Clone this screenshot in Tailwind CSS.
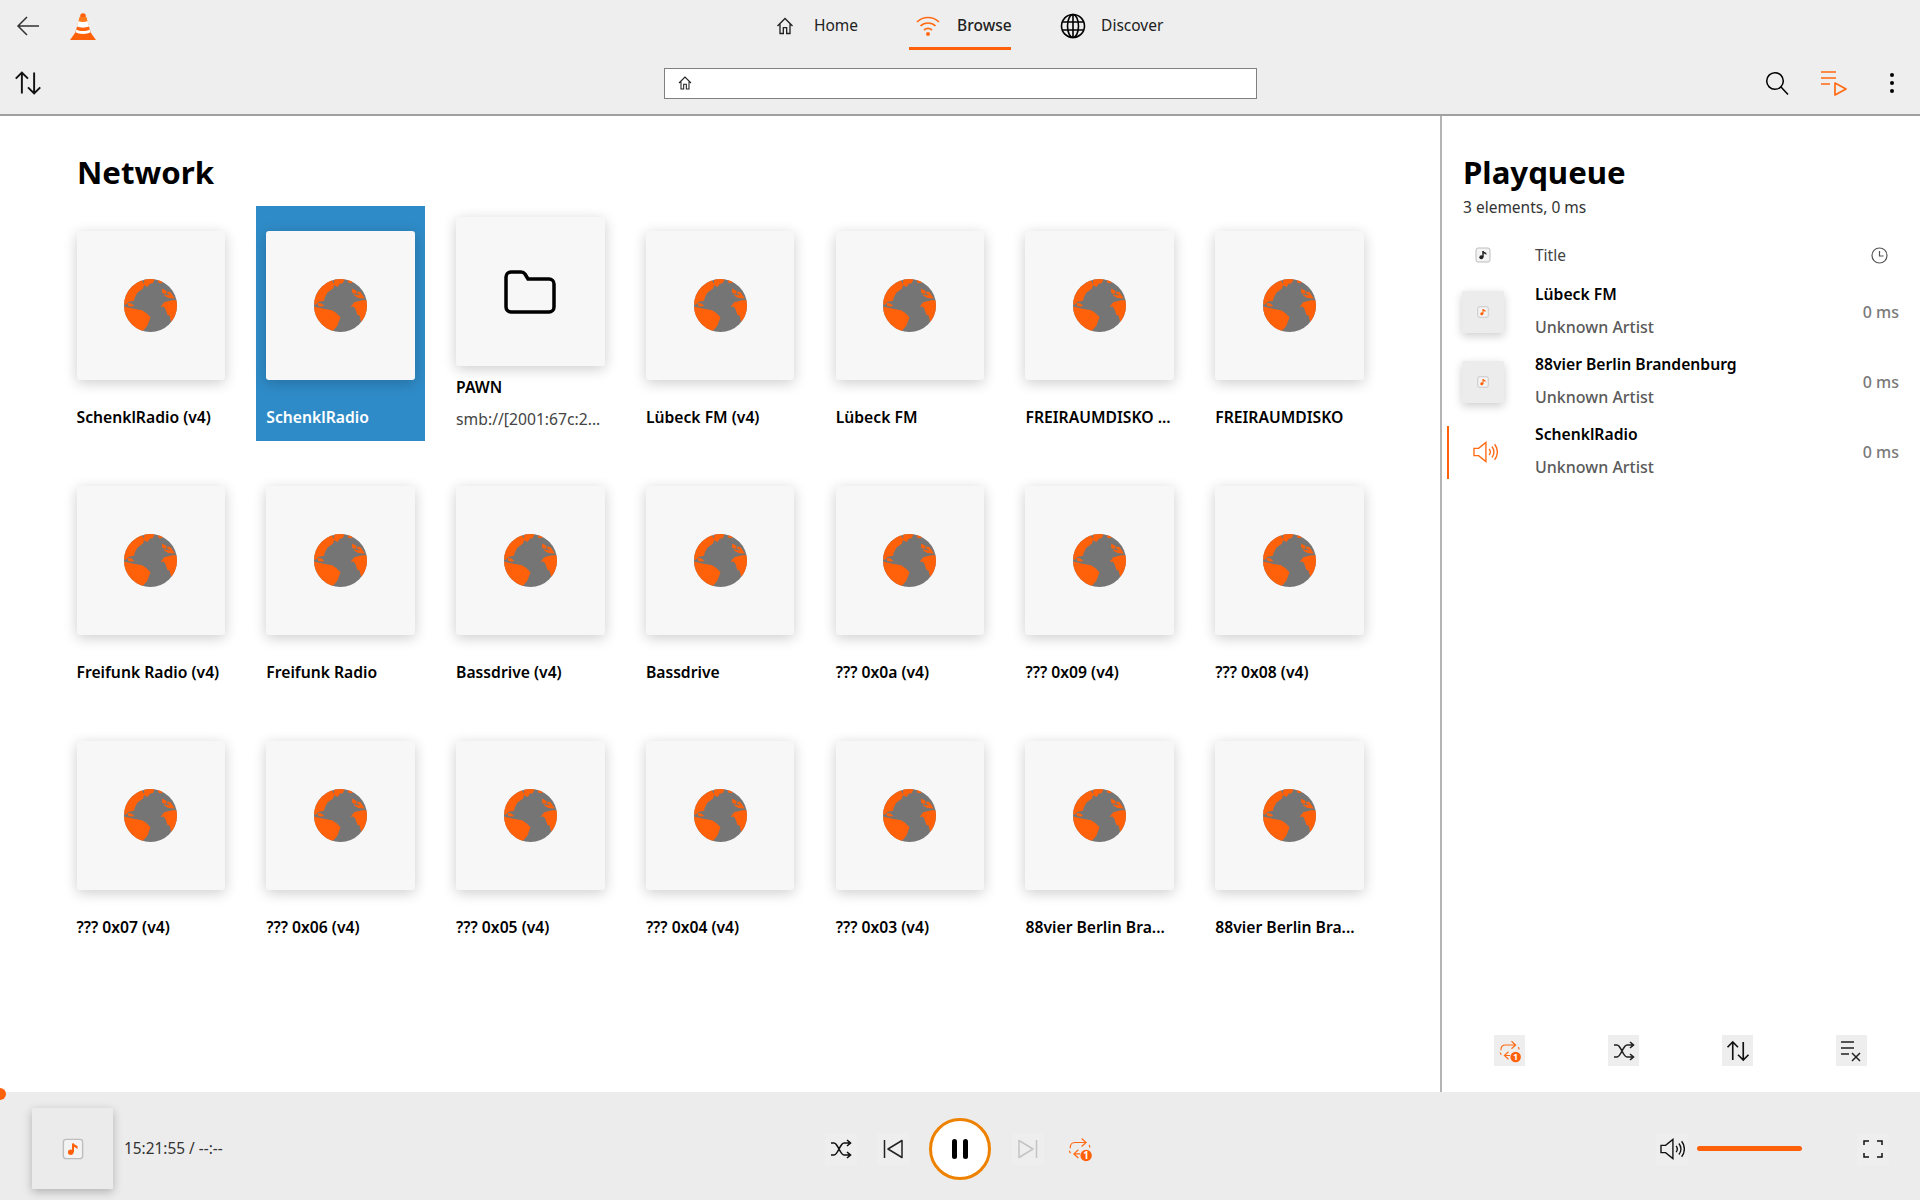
<!DOCTYPE html>
<html lang="en">

<head>
    <meta charset="UTF-8" />
    <title>VLC media player</title>
    <script src="https://cdn.jsdelivr.net/npm/@tailwindcss/browser@4"></script>
</head>

<body class="bg-white font-['Noto_Sans',sans-serif] text-black">
    <!-- shared icons -->
    <svg class="absolute w-0 h-0"><clipPath id="globe-clip"><circle cx="50" cy="50" r="50" /></clipPath></svg>
    <svg class="hidden">
        <symbol id="i-home" viewBox="0 0 24 24"><path d="M3 12 12 3l9 9M6 10v11h4v-7h4v7h4V10" fill="none" stroke="currentColor" stroke-width="1.6" /></symbol>
        <symbol id="i-sort" viewBox="0 0 32 32"><path d="M9 28V4M2 11l7-7 7 7M23 4v24M16 21l7 7 7-7" fill="none" stroke="currentColor" stroke-width="2.2" /></symbol>
        <symbol id="i-shuffle" viewBox="0 0 24 24"><path d="M2 6h3c4 0 6 12 10 12h6M2 18h3c4 0 6-12 10-12h6M18 3l3.500 3-3.500 3M18 15l3.500 3-3.500 3" fill="none" stroke="currentColor" stroke-width="1.600" /></symbol>
        <symbol id="i-repeat" viewBox="0 0 32 32">
            <path d="M4 15v-1c0-4 3-6 6-6h13M18 3l5.500 5-5.500 5M27 11c1 1 1 2 1 3M16 22H9M14 17l-5.500 5 5.500 5M3 18c0 1 .5 2 1.500 3" fill="none" stroke="#ff6a13" stroke-width="1.500" />
            <circle cx="23.500" cy="24" r="7" fill="#ff610a" />
            <text x="23.500" y="28.500" text-anchor="middle" font-size="12" font-weight="700" fill="#fff" font-family="Noto Sans">1</text>
        </symbol>
        <symbol id="i-speaker" viewBox="0 0 28 24"><path d="M2 8v8h5l8 6.500V1.500L7 8ZM18.500 8.500c1.500 2 1.500 5 0 7M21.500 6c3 3.500 3 8.500 0 12M24.500 3.500c4 5 4 12 0 17" fill="none" stroke="currentColor" stroke-width="1.500" /></symbol>
        <symbol id="i-note" viewBox="0 0 24 24">
            <rect x="1.500" y="1.500" width="21" height="21" rx="3" fill="#f3f3f3" stroke="#bdbdbd" stroke-width="1.500" />
            <path d="M12 6v9.500" stroke="currentColor" stroke-width="2.200" fill="none" />
            <path d="M12 5.500c1 2 3.500 2 5 3.500v3c-1.500-1.500-3.500-2-5-2.500Z" fill="currentColor" />
            <circle cx="9.500" cy="15.500" r="3" fill="currentColor" />
        </symbol>
        <symbol id="i-globe" viewBox="0 0 100 100">
            <circle cx="50" cy="50" r="50" fill="#757575" />
            <g clip-path="url(#globe-clip)">
                <path fill="#ff610a" d="M0 47V0h32l6 10-2 8-11 8-5 10-1 5-10 2-6 6ZM38 0h20l-4 8-6 1-3 6-7-3ZM63 0l12 5-5 3-5-1ZM0 52l18 4 16 3 8 5 8 8-6 16-10 12H0ZM7 45l7 1 6 5-6 1-6-1ZM69 53l7-9 15-4 9 0v36l-7 1-4 4-3-12-4-1-4-12-3-4ZM72 18l9 5 7 2 8 12-12-1-7-4-5-7Z" />
            </g>
            <path d="M74 28l12 2M82 20l-2 10" fill="none" stroke="#757575" stroke-width="2" />
        </symbol>
    </svg>

    <div class="w-[1920px] h-[1200px] overflow-hidden flex flex-col">
        <!-- HEADER -->
        <header class="h-[116px] bg-[#eeeeee] border-b-2 border-[#a0a0a0] flex flex-col shrink-0">
            <div class="h-[52px] flex items-center">
                <svg class="w-6 h-6 ml-4 text-[#333]" viewBox="0 0 24 24"><path d="M23 12H3M11 3l-9 9 9 9" fill="none" stroke="currentColor" stroke-width="1.500" /></svg>
                <!-- vlc cone -->
                <svg class="w-[26px] h-[27px] ml-[30px]" viewBox="0 0 26 27">
                    <circle cx="13" cy="3" r="2.800" fill="#ff610a" />
                    <path d="M9.500 4h7l2 8c-3 1.500-8 1.500-11 0Z" fill="#ff7a1a" />
                    <path d="M8.500 8c2.500 1.200 6.500 1.200 9 0l1.200 5c-3 1.500-8.400 1.500-11.400 0Z" fill="#fff" />
                    <path d="M7 13.500c3 1.500 9 1.500 12 0l1.200 4.500c-4 2-10.400 2-14.400 0Z" fill="#ff610a" />
                    <path d="M6 17c3.500 2 10.500 2 14 0l1 3 5 7H0l5-7Z" fill="#ff610a" />
                    <path d="M6.300 16.500c3.500 2 9.900 2 13.400 0l.8 2.700c-4 2.300-11 2.300-15 0Z" fill="#fff" />
                </svg>
                <!-- tabs -->
                <nav class="flex items-center h-[52px] ml-[675px] text-[15.500px] text-[#222]">
                    <div class="flex items-center h-full">
                        <svg class="w-5 h-5 mx-1 text-[#222]"><use href="#i-home" /></svg>
                        <span class="ml-[15px]">Home</span>
                    </div>
                    <div class="relative flex items-center h-[52px] w-[102px] ml-[51px]">
                        <svg class="w-[26px] h-[26px] mx-[6px] text-[#ff6a13] shrink-0" viewBox="0 0 26 26"><path d="M2 9c6-6 16-6 22 0M5.500 13c4-4 11-4 15 0M9 17c2.500-2 5.500-2 8 0" fill="none" stroke="currentColor" stroke-width="1.700" /><circle cx="13" cy="21" r="2" fill="currentColor" /></svg>
                        <span class="ml-[10px] font-medium">Browse</span>
                        <span class="absolute left-0 right-0 bottom-[2px] h-[3px] bg-[#ff610a]"></span>
                    </div>
                    <div class="flex items-center h-full ml-[43px]">
                        <svg class="w-[26px] h-[26px] mx-[6px]" viewBox="0 0 26 26"><g fill="none" stroke="#000" stroke-width="1.600"><circle cx="13" cy="13" r="11.500" /><ellipse cx="13" cy="13" rx="5.500" ry="11.500" /><path d="M13 1.500v23M2 9h22M2 17h22" /></g></svg>
                        <span class="ml-[9px]">Discover</span>
                    </div>
                </nav>
            </div>
            <div class="h-[62px] flex items-center">
                <svg class="w-7 h-7 ml-[14px] text-[#111]"><use href="#i-sort" /></svg>
                <div class="ml-[622px] w-[593px] h-[31px] bg-white border border-[#808080] flex items-center pl-[12px]">
                    <svg class="w-4 h-4 text-[#222]"><use href="#i-home" /></svg>
                </div>
                <svg class="w-6 h-6 ml-[508px]" viewBox="0 0 24 24"><circle cx="10" cy="10" r="8.300" fill="none" stroke="#000" stroke-width="1.500" /><path d="m16 16 7 7.500" stroke="#000" stroke-width="1.500" /></svg>
                <svg class="w-[28px] h-[26px] ml-[31px] text-[#ff6a13]" viewBox="0 0 28 26"><path d="M1 2h15M1 8h15M1 14h9" stroke="currentColor" stroke-width="1.700" fill="none" /><path d="M15 13l11 6-11 6Z" stroke="currentColor" stroke-width="1.700" stroke-linejoin="round" fill="none" /></svg>
                <div class="ml-[42px] flex flex-col gap-[4px]">
                    <span class="w-1 h-1 rounded-full bg-black"></span>
                    <span class="w-1 h-1 rounded-full bg-black"></span>
                    <span class="w-1 h-1 rounded-full bg-black"></span>
                </div>
            </div>
        </header>

        <!-- MAIN -->
        <main class="flex h-[976px] shrink-0">
            <section class="w-[1440px] pt-[34px] shrink-0">
                <h1 class="ml-[77px] text-[31.200px] leading-[44px] font-bold">Network</h1>
                <div id="grid" class="mt-[12px] ml-[66px] grid grid-cols-[repeat(7,169px)] auto-rows-[235px] gap-x-[20.800px] gap-y-[20px]"></div>
            </section>

            <aside class="flex-1 border-l-2 border-[#b4b4b4] flex flex-col pt-[34px]">
                <h2 class="ml-[21px] text-[31.200px] leading-[44px] font-bold">Playqueue</h2>
                <p class="ml-[21px] text-[15.500px] leading-[26px] text-[#333]">3 elements, 0 ms</p>
                <div class="mt-[13px] h-[44px] flex items-center text-[#444]">
                    <svg class="w-4 h-4 ml-[33px] text-[#222]"><use href="#i-note" /></svg>
                    <span class="ml-[44px] pt-[2px] text-[15.500px] flex-1">Title</span>
                    <svg class="w-[17px] h-[17px] mr-[32px]" viewBox="0 0 17 17"><circle cx="8.500" cy="8.500" r="7.500" fill="none" stroke="#555" stroke-width="1.200" /><path d="M8.500 4v5h4" fill="none" stroke="#555" stroke-width="1.200" /></svg>
                </div>
                <div id="queue"></div>
                <div class="mt-auto mb-[26px] ml-[52px] flex gap-[83px]">
                    <button class="w-[31px] h-[31px] bg-[#eeeeee] flex items-center justify-center"><svg class="w-6 h-6"><use href="#i-repeat" /></svg></button>
                    <button class="w-[31px] h-[31px] bg-[#eeeeee] flex items-center justify-center text-[#222]"><svg class="w-6 h-6"><use href="#i-shuffle" /></svg></button>
                    <button class="w-[31px] h-[31px] bg-[#eeeeee] flex items-center justify-center text-[#111]"><svg class="w-6 h-6"><use href="#i-sort" /></svg></button>
                    <button class="w-[31px] h-[31px] bg-[#eeeeee] flex items-center justify-center"><svg class="w-6 h-6" viewBox="0 0 24 24"><path d="M1 3h13M1 9h13M1 15h8M12 14l8 8M20 14l-8 8" fill="none" stroke="#222" stroke-width="1.500" /></svg></button>
                </div>
            </aside>
        </main>

        <!-- PLAYER -->
        <footer class="relative h-[108px] shrink-0 bg-[#ececec] flex items-center pt-[5px]">
            <span class="absolute -left-[6px] -top-[4px] w-3 h-3 rounded-full bg-[#ff610a]"></span>
            <div class="w-[825px] shrink-0 flex items-center">
                <div class="ml-[32px] w-[81px] h-[81px] bg-[#ebebeb] rounded-[1px] shadow-[0_3px_10px_rgba(0,0,0,0.25)] flex items-center justify-center">
                    <svg class="w-[22px] h-[22px] text-[#ff610a]"><use href="#i-note" /></svg>
                </div>
                <span class="ml-[11px] text-[15.400px] text-[#333]">15:21:55 / --:--</span>
            </div>
            <div class="flex items-center">
                <button class="w-8 h-8 bg-[#eeeeee] flex items-center justify-center text-[#111]"><svg class="w-[24px] h-[24px]"><use href="#i-shuffle" /></svg></button>
                <button class="w-8 h-8 ml-5 bg-[#eeeeee] flex items-center justify-center"><svg class="w-6 h-6" viewBox="0 0 24 24"><path d="M3.500 3v18M21 3.500 7 12l14 8.500Z" fill="none" stroke="#222" stroke-width="1.500" stroke-linejoin="round" /></svg></button>
                <button class="w-[62px] h-[62px] ml-5 rounded-full bg-white border-[3px] border-[#ee8200] flex items-center justify-center gap-[6px]">
                    <span class="w-[5px] h-5 rounded-full bg-black"></span>
                    <span class="w-[5px] h-5 rounded-full bg-black"></span>
                </button>
                <button class="w-8 h-8 ml-[21px] bg-[#eeeeee] flex items-center justify-center"><svg class="w-6 h-6" viewBox="0 0 24 24"><path d="M20.500 3v18M3 3.500 17 12 3 20.500Z" fill="none" stroke="#c4c4c4" stroke-width="1.500" stroke-linejoin="round" /></svg></button>
                <button class="w-8 h-8 ml-5 flex items-center justify-center"><svg class="w-[26px] h-[26px]"><use href="#i-repeat" /></svg></button>
            </div>
            <button class="ml-[560px] w-8 h-8 bg-[#eeeeee] flex items-center justify-center text-[#111]"><svg class="w-[26px] h-[22px]"><use href="#i-speaker" /></svg></button>
            <div class="ml-[9px] w-[105px] h-[5px] rounded-full bg-[#ff610a]"></div>
            <button class="ml-[55px] w-8 h-8 bg-[#eeeeee] flex items-center justify-center"><svg class="w-5 h-[18px]" viewBox="0 0 20 18"><path d="M1 5V1h5M14 1h5v4M19 13v4h-5M6 17H1v-4" fill="none" stroke="#111" stroke-width="1.500" /></svg></button>
        </footer>
    </div>

    <script>
        const items = [
            'SchenklRadio (v4)', 'SchenklRadio', 'PAWN', 'Lübeck FM (v4)', 'Lübeck FM', 'FREIRAUMDISKO ...', 'FREIRAUMDISKO',
            'Freifunk Radio (v4)', 'Freifunk Radio', 'Bassdrive (v4)', 'Bassdrive', '??? 0x0a (v4)', '??? 0x09 (v4)', '??? 0x08 (v4)',
            '??? 0x07 (v4)', '??? 0x06 (v4)', '??? 0x05 (v4)', '??? 0x04 (v4)', '??? 0x03 (v4)', '88vier Berlin Bra...', '88vier Berlin Bra...'
        ];
        const cardCls = 'w-[148.500px] h-[149px] bg-[#f7f7f7] rounded-[3px] shadow-[0_3px_14px_rgba(0,0,0,0.2)] flex items-center justify-center';
        const globe = '<svg class="w-[53px] h-[53px]"><use href="#i-globe" /></svg>';
        const folder = '<svg class="w-[52px] h-[46px]" viewBox="0 0 52 46"><path d="M2 8a5 5 0 0 1 5-5h10a5 5 0 0 1 4 2l3 5h21a5 5 0 0 1 5 5v23a5 5 0 0 1-5 5H7a5 5 0 0 1-5-5Z" fill="none" stroke="#000" stroke-width="3.500" /></svg>';

        document.getElementById('grid').innerHTML = items.map((name, i) => {
            if (name === 'PAWN') {
                return `<div class="pl-[10.500px] pt-[11px]">
                    <div class="${cardCls}">${folder}</div>
                    <p class="mt-[9px] text-[15.700px] leading-[24px] font-semibold">PAWN</p>
                    <p class="mt-[8px] text-[15.700px] leading-[24px] text-[#444] whitespace-nowrap">smb://[2001:67c:2...</p>
                </div>`;
            }
            const selected = i === 1;
            return `<div class="pl-[10.500px] pt-[25px] ${selected ? 'bg-[#2f8bc7] text-white' : ''}">
                <div class="${cardCls}">${globe}</div>
                <p class="mt-[25px] text-[15.700px] leading-[24px] font-semibold whitespace-nowrap">${name}</p>
            </div>`;
        }).join('');

        const queue = ['Lübeck FM', '88vier Berlin Brandenburg', 'SchenklRadio'];
        document.getElementById('queue').innerHTML = queue.map((title, i) => {
            const current = i === 2;
            const thumb = current
                ? '<svg class="w-[26px] h-[22px] text-[#ff6a13] ml-[4px]"><use href="#i-speaker" /></svg>'
                : '<div class="w-[42px] h-[42px] bg-[#ececec] rounded-[1px] shadow-[0_3px_10px_rgba(0,0,0,0.2)] flex items-center justify-center -mt-[1px]"><svg class="w-3 h-3 text-[#ff610a]"><use href="#i-note" /></svg></div>';
            return `<div class="h-[70px] flex items-center">
                <span class="ml-[5px] w-[2px] h-[53px] ${current ? 'bg-[#ff610a]' : ''}"></span>
                <div class="ml-[13px] w-[42px] flex items-center justify-center">${thumb}</div>
                <div class="ml-[31px] flex-1 h-full pt-[1px]">
                    <p class="text-[15.700px] leading-[33px] font-semibold">${title}</p>
                    <p class="text-[16px] leading-[33px] font-medium text-[#5a5a5a]">Unknown Artist</p>
                </div>
                <span class="mr-[21px] text-[16px] font-medium text-[#7a7a7a]">0 ms</span>
            </div>`;
        }).join('');
    </script>
</body>

</html>
